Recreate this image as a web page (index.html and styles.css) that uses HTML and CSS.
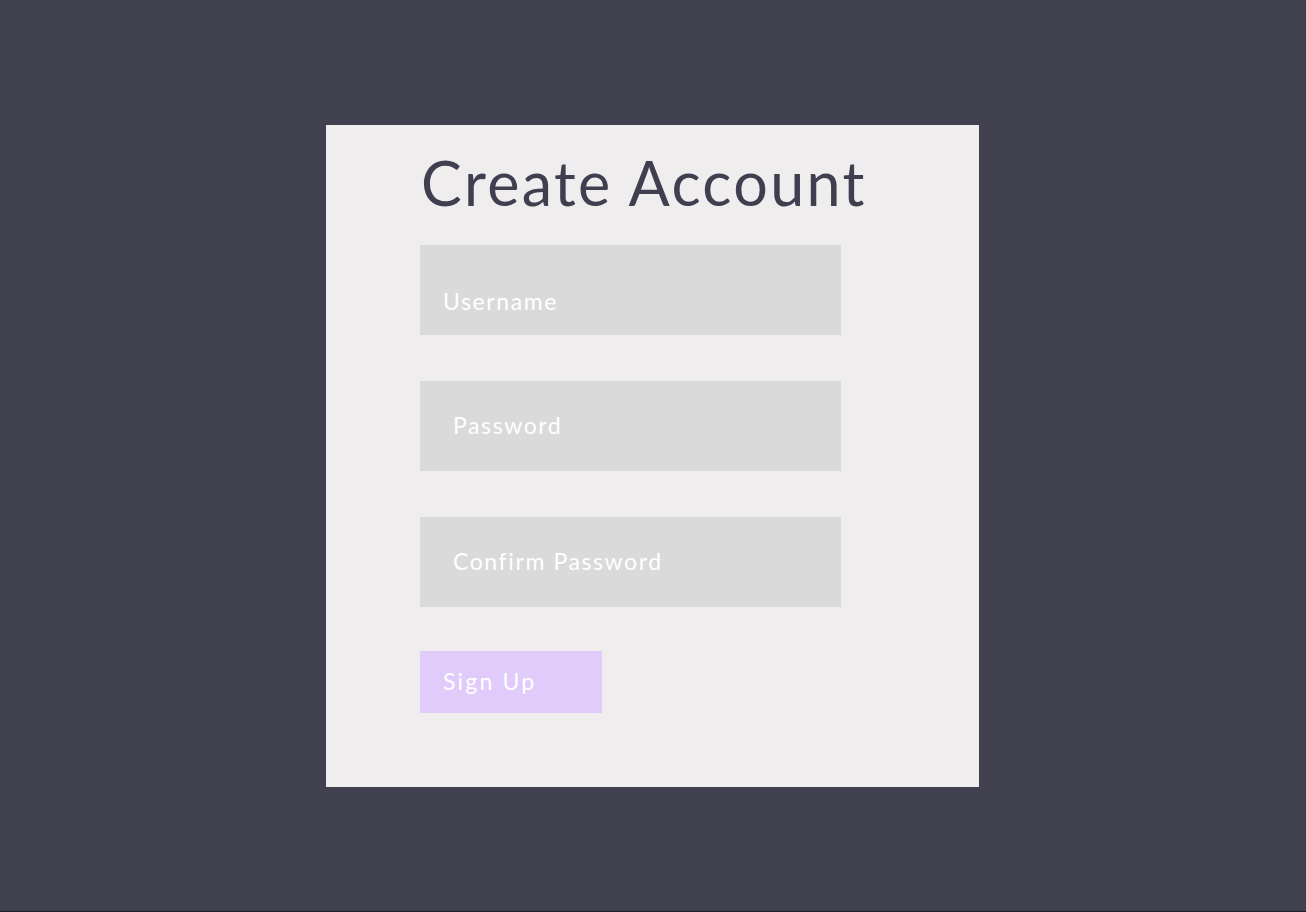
FILE: index.html
```html
<!DOCTYPE html>
<html lang="en">
<head>
<meta charset="utf-8">
<title>Create Account</title>
<link rel="stylesheet" href="styles.css">
</head>
<body>
<main class="page">
  <form class="card">
    <h1 class="title">Create Account</h1>
    <input class="field field-user" type="text" placeholder="Username">
    <input class="field field-pass" type="password" placeholder="Password">
    <input class="field field-pass" type="password" placeholder="Confirm Password">
    <button class="btn" type="button">Sign Up</button>
  </form>
</main>
</body>
</html>
```
FILE: styles.css
```css
html {
  background: #1e1e26;
}
body {
  margin: 0;
  height: 911px;
  background: #41404f;
  font-family: Lato, "Noto Sans", sans-serif;
}
.page {
  display: flex;
  justify-content: center;
  padding-top: 125px;
  padding-right: 1px;
}
.card {
  box-sizing: border-box;
  width: 653px;
  height: 662px;
  background: #efedee;
  padding: 0 0 0 94px;
  display: flex;
  flex-direction: column;
  align-items: flex-start;
}
.title {
  margin: 18px 0 0 1px;
  font-weight: 400;
  font-size: 61px;
  line-height: 80px;
  color: #403f50;
  letter-spacing: 2.35px;
}
.field {
  box-sizing: border-box;
  width: 421px;
  height: 90px;
  border: none;
  outline: none;
  background: #dadada;
  font-family: inherit;
  font-size: 23px;
  letter-spacing: 1.6px;
  color: #fff;
  margin: 0;
}
.field::placeholder {
  color: #fff;
  opacity: 1;
}
.field-user {
  margin-top: 22px;
  padding: 22px 0 0 23px;
}
.field-pass {
  margin-top: 46px;
  padding: 0 0 3px 33px;
}
.btn {
  margin-top: 44px;
  width: 182px;
  height: 62px;
  border: none;
  background: #e0cbfb;
  color: #fff;
  font-family: inherit;
  font-size: 23px;
  letter-spacing: 2.2px;
  text-align: left;
  padding: 0 0 2px 23px;
}
```
